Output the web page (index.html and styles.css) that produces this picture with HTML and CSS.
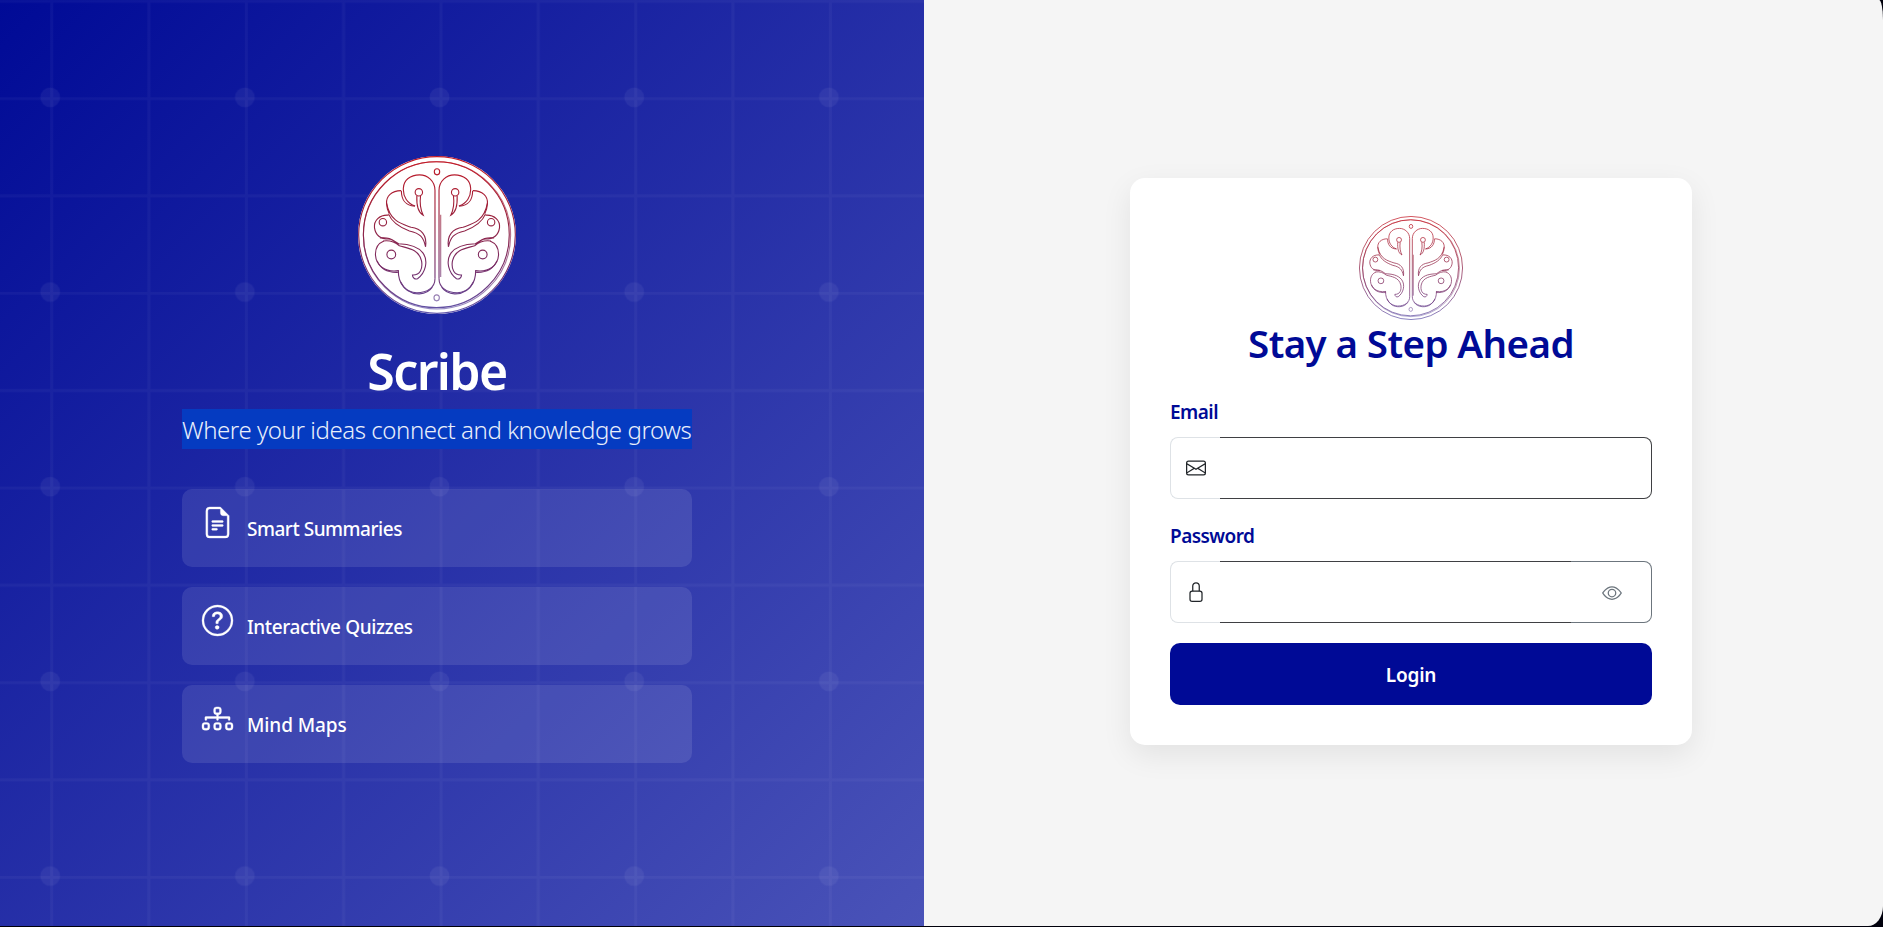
FILE: index.html
```html
<!DOCTYPE html>
<html lang="en">
<head>
<meta charset="utf-8">
<title>Scribe</title>
<link rel="stylesheet" href="styles.css">
</head>
<body>
<svg class="defs" width="0" height="0" aria-hidden="true">
  <defs>
    <linearGradient id="ink" gradientUnits="userSpaceOnUse" x1="0" y1="48" x2="0" y2="522">
      <stop offset="0" stop-color="#c41824"/>
      <stop offset=".4" stop-color="#98203c"/>
      <stop offset=".75" stop-color="#73306f"/>
      <stop offset="1" stop-color="#5f58ae"/>
    </linearGradient>
    <g id="lobes">
      <path d="M284 415V152C284 125 262 106 238 106C210 106 191 122 190 145C188 172 203 192 225 199"/>
      <path d="M184 153C184 178 196 198 224 199"/>
      <path d="M183 153C155 153 138 170 140 192C141 207 144 215 148 222"/>
      <circle cx="236" cy="158" r="11"/>
      <path d="M230 169C229 195 231 217 249 226C241 210 238 192 241 169"/>
      <path d="M140 190C150 245 185 252 213 262C243 266 261 285 256 320C250 292 240 280 208 273C178 262 156 248 146 223"/>
      <path d="M146 226C118 224 102 243 104 263C107 285 120 298 150 297"/>
      <circle cx="129" cy="247" r="11"/>
      <path d="M120 294C150 290 160 302 176 311C200 312 230 315 248 338C265 362 256 398 232 415C224 418 217 412 217 404C240 405 248 385 244 362C236 326 200 324 178 317C165 306 150 300 130 303"/>
      <path d="M132 303C115 310 106 325 107 345C109 375 135 397 176 391"/>
      <path d="M112 362C122 386 142 398 176 396"/>
      <circle cx="154" cy="343" r="13"/>
      <path d="M175 390C174 432 198 455 230 457C262 457 284 440 284 415"/>
      <path d="M182 425C194 450 212 461 238 460C254 459 268 452 276 440"/>
    </g>
    <g id="emblem" fill="none" stroke="url(#ink)">
      <circle cx="290" cy="285" r="233"/>
      <circle cx="288" cy="284" r="217"/>
      <circle cx="290" cy="286" r="219" opacity=".65"/>
      <use href="#lobes"/>
      <use href="#lobes" transform="matrix(-1 0 0 1 580 0)"/>
      <path d="M301 225V410" opacity=".7"/>
      <ellipse cx="290" cy="97" rx="8" ry="9"/>
      <ellipse cx="289" cy="472" rx="8" ry="9" opacity=".7"/>
    </g>
    <pattern id="grid" x="50.2" y="97.3" width="194.67" height="194.67" patternUnits="userSpaceOnUse">
      <path d="M1.4 0V194.67M98.7 0V194.67M0 1.2H194.67M0 98.5H194.67" stroke="#fff" stroke-opacity=".036" stroke-width="3"/>
    </pattern>
    <pattern id="dots" x="-47.1" y="0" width="194.67" height="194.67" patternUnits="userSpaceOnUse">
      <circle cx="97.3" cy="97.3" r="9.8" fill="#fff" fill-opacity=".055"/>
    </pattern>
  </defs>
</svg>

<div class="app">
  <section class="hero">
    <svg class="hero-grid" width="924" height="926">
      <rect width="924" height="926" fill="url(#grid)"/>
      <rect width="924" height="926" fill="url(#dots)"/>
    </svg>
    <div class="hero-content">
      <svg class="logo" viewBox="55 50 470 470"><circle cx="290" cy="285" r="235" fill="#fff"/><use href="#emblem" stroke-width="3.3"/></svg>
      <h1 class="brand">Scribe</h1>
      <p class="tagline">Where your ideas connect and knowledge grows</p>
      <ul class="features">
        <li class="feature">
          <svg class="feature-icon" viewBox="0 0 16 16"><path d="M5.500 7a.5.5 0 0 0 0 1h5a.5.5 0 0 0 0-1zM5 9.500a.5.5 0 0 1 .5-.5h5a.5.5 0 0 1 0 1h-5a.5.5 0 0 1-.5-.5m0 2a.5.5 0 0 1 .5-.5h2a.5.5 0 0 1 0 1h-2a.5.5 0 0 1-.5-.5"/><path d="M9.500 0H4a2 2 0 0 0-2 2v12a2 2 0 0 0 2 2h8a2 2 0 0 0 2-2V4.500zm0 1v2A1.500 1.500 0 0 0 11 4.500h2V14a1 1 0 0 1-1 1H4a1 1 0 0 1-1-1V2a1 1 0 0 1 1-1z"/></svg>
          <span class="feature-name smart">Smart Summaries</span>
        </li>
        <li class="feature">
          <svg class="feature-icon" viewBox="0 0 16 16"><path d="M8 15A7 7 0 1 1 8 1a7 7 0 0 1 0 14m0 1A8 8 0 1 0 8 0a8 8 0 0 0 0 16"/><path d="M5.255 5.786a.237.237 0 0 0 .241.247h.825c.138 0 .248-.113.266-.25.09-.656.54-1.134 1.342-1.134.686 0 1.314.343 1.314 1.168 0 .635-.374.927-.965 1.371-.673.489-1.206 1.060-1.168 1.987l.003.217a.25.25 0 0 0 .25.246h.811a.25.25 0 0 0 .25-.25v-.105c0-.718.273-.927 1.010-1.486.609-.463 1.244-.977 1.244-2.056 0-1.511-1.276-2.241-2.673-2.241-1.267 0-2.655.59-2.750 2.286m1.557 5.763c0 .533.425.927 1.010.927.609 0 1.028-.394 1.028-.927 0-.552-.42-.94-1.029-.94-.584 0-1.009.388-1.009.94"/></svg>
          <span class="feature-name quiz">Interactive Quizzes</span>
        </li>
        <li class="feature">
          <svg class="feature-icon" viewBox="0 0 16 16"><path fill-rule="evenodd" d="M6 3.500A1.500 1.500 0 0 1 7.500 2h1A1.500 1.500 0 0 1 10 3.500v1A1.500 1.500 0 0 1 8.500 6v1H14a.5.5 0 0 1 .5.5v1a.5.5 0 0 1-1 0V8h-5v.5a.5.5 0 0 1-1 0V8h-5v.5a.5.5 0 0 1-1 0v-1A.5.5 0 0 1 2 7h5.500V6A1.500 1.500 0 0 1 6 4.500zM8.500 5a.5.5 0 0 0 .5-.5v-1a.5.5 0 0 0-.5-.5h-1a.5.5 0 0 0-.5.5v1a.5.5 0 0 0 .5.5zM0 11.500A1.500 1.500 0 0 1 1.500 10h1A1.500 1.500 0 0 1 4 11.500v1A1.500 1.500 0 0 1 2.500 14h-1A1.500 1.500 0 0 1 0 12.500zm1.500-.5a.5.5 0 0 0-.5.5v1a.5.5 0 0 0 .5.5h1a.5.5 0 0 0 .5-.5v-1a.5.5 0 0 0-.5-.5zm4.500.5A1.500 1.500 0 0 1 7.500 10h1a1.500 1.500 0 0 1 1.500 1.500v1A1.500 1.500 0 0 1 8.500 14h-1A1.500 1.500 0 0 1 6 12.500zm1.500-.5a.5.5 0 0 0-.5.5v1a.5.5 0 0 0 .5.5h1a.5.5 0 0 0 .5-.5v-1a.5.5 0 0 0-.5-.5zm4.500.5a1.500 1.500 0 0 1 1.500-1.500h1a1.500 1.500 0 0 1 1.500 1.500v1a1.500 1.500 0 0 1-1.500 1.500h-1a1.500 1.500 0 0 1-1.500-1.500zm1.500-.5a.5.5 0 0 0-.5.5v1a.5.5 0 0 0 .5.5h1a.5.5 0 0 0 .5-.5v-1a.5.5 0 0 0-.5-.5z"/></svg>
          <span class="feature-name maps">Mind Maps</span>
        </li>
      </ul>
    </div>
  </section>

  <main class="auth">
    <form class="card">
      <svg class="logo-small" viewBox="55 50 470 470"><use href="#emblem" stroke-width="3.3"/></svg>
      <h2 class="title">Stay a Step Ahead</h2>
      <label class="label email" for="email">Email</label>
      <div class="field">
        <span class="prefix"><svg class="icon" viewBox="0 0 16 16"><path d="M0 4a2 2 0 0 1 2-2h12a2 2 0 0 1 2 2v8a2 2 0 0 1-2 2H2a2 2 0 0 1-2-2zm2-1a1 1 0 0 0-1 1v.217l7 4.200 7-4.200V4a1 1 0 0 0-1-1zm13 2.383-4.708 2.825L15 11.105zm-.034 6.876-5.640-3.471L8 9.583l-1.326-.795-5.640 3.470A1 1 0 0 0 2 13h12a1 1 0 0 0 .966-.741M1 11.105l4.708-2.897L1 5.383z"/></svg></span>
        <input class="input last" id="email" type="email">
      </div>
      <label class="label password" for="password">Password</label>
      <div class="field">
        <span class="prefix"><svg class="icon lock" viewBox="0 0 16 16"><rect x="3.200" y="7.300" width="9.600" height="8.200" rx="1.700"/><path d="M5.400 7.300V3.200a2.600 2.600 0 0 1 5.200 0V7.300"/></svg></span>
        <input class="input" id="password" type="password">
        <button class="reveal" type="button" aria-label="Show password"><svg class="icon" viewBox="0 0 16 16"><path d="M16 8s-3-5.500-8-5.500S0 8 0 8s3 5.500 8 5.500S16 8 16 8M1.173 8a13 13 0 0 1 1.660-2.043C4.120 4.668 5.880 3.500 8 3.500s3.879 1.168 5.168 2.457A13 13 0 0 1 14.828 8q-.086.13-.195.288c-.335.48-.83 1.120-1.465 1.755C11.879 11.332 10.119 12.500 8 12.500s-3.879-1.168-5.168-2.457A13 13 0 0 1 1.172 8z"/><path d="M8 5.500a2.500 2.500 0 1 0 0 5 2.500 2.500 0 0 0 0-5M4.500 8a3.500 3.500 0 1 1 7 0 3.500 3.500 0 0 1-7 0"/></svg></button>
      </div>
      <button class="login" type="button"><span class="login-text">Login</span></button>
    </form>
  </main>
</div>
</body>
</html>
```
FILE: styles.css
```css
* { box-sizing: border-box; }
html, body { margin: 0; height: 100%; overflow: hidden; background: #00000c; }
body { font-family: "Noto Sans", "Open Sans", sans-serif; }
.defs { display: block; }
.app {
  display: flex;
  height: 926px;
  overflow: hidden;
  background: #f5f5f5;
  border-radius: 0 4px 15px 0 / 0 20px 20px 0;
}
.hero {
  position: relative;
  flex: 0 0 924px;
  display: flex;
  justify-content: center;
  padding-right: 50px;
  background: linear-gradient(135deg, #000a96 0%, #4a53b8 100%);
  color: #fff;
}
.hero-grid { position: absolute; left: 0; top: 0; }
.hero-content {
  position: relative;
  width: 510px;
  padding-top: 156px;
  display: flex;
  flex-direction: column;
  align-items: center;
}
.logo { width: 158px; height: 158px; flex: none; margin-right: 1px; }
.brand {
  margin: 28px 0 0;
  height: 58px;
  line-height: 58px;
  font-size: 50px;
  font-weight: 600;
  letter-spacing: -1.6px;
  white-space: nowrap;
}
.tagline {
  margin: 9px 0 0;
  width: 510px;
  height: 40px;
  line-height: 42px;
  background: #053bc1;
  color: #e9effb;
  font-size: 24px;
  font-weight: 300;
  letter-spacing: -.43px;
  white-space: nowrap;
}
.features {
  list-style: none;
  margin: 40px 0 0;
  padding: 0;
  width: 100%;
  display: flex;
  flex-direction: column;
  gap: 20px;
}
.feature {
  height: 78px;
  padding: 18px 20px 0;
  display: flex;
  align-items: flex-start;
  gap: 14px;
  border-radius: 10px;
  background: rgba(255, 255, 255, .1);
}
.feature-icon { width: 31px; height: 31px; fill: #fff; stroke: #fff; stroke-width: .18; flex: none; overflow: visible; }
.feature-name {
  margin-top: 7px;
  line-height: 30px;
  font-size: 19px;
  font-weight: 500;
  letter-spacing: -.4px;
  white-space: nowrap;
}
.smart { letter-spacing: -.48px; }
.maps { letter-spacing: -.1px; }
.auth { flex: 1; display: flex; justify-content: center; padding: 178px 0 0 15px; }
.card {
  width: 562px;
  height: 567px;
  padding: 38px 40px 0;
  display: flex;
  flex-direction: column;
  border-radius: 15px;
  background: #fff;
  box-shadow: 0 10px 30px rgba(0, 0, 0, .08);
}
.logo-small { width: 104px; height: 104px; margin-right: 1px; align-self: center; flex: none; }
.title {
  margin: -1px 0 0;
  height: 48px;
  line-height: 48px;
  text-align: center;
  color: #000a96;
  font-size: 38.5px;
  font-weight: 600;
  letter-spacing: -.6px;
  white-space: nowrap;
}
.label {
  height: 30px;
  line-height: 30px;
  color: #000a96;
  font-size: 19px;
  font-weight: 600;
  letter-spacing: -.55px;
}
.email { margin: 30px 0 10px; align-self: flex-start; }
.password { margin: 22px 0 10px; align-self: flex-start; }
.field { display: flex; height: 62px; flex: none; }
.prefix {
  width: 50px;
  display: flex;
  align-items: center;
  padding-left: 15px;
  border: 1px solid #dee2e6;
  border-right: 0;
  border-radius: 8px 0 0 8px;
}
.icon { width: 20px; height: 20px; fill: #212529; }
.lock { fill: none; stroke: #212529; stroke-width: 1; }
.input {
  flex: 1;
  min-width: 0;
  padding: 0 15px;
  border: 1px solid #3f4043;
  border-width: 1px 0;
  background: #fff;
  outline: 0;
}
.last { border-right-width: 1px; border-radius: 0 8px 8px 0; }
.reveal {
  width: 81px;
  padding: 1px 0 0 1px;
  display: flex;
  align-items: center;
  justify-content: center;
  border: 1px solid #6c757d;
  border-left: 0;
  border-radius: 0 8px 8px 0;
  background: #fff;
}
.reveal .icon { fill: #6c757d; }
.login {
  margin-top: 20px;
  height: 62px;
  padding: 2px 0 0;
  border: 0;
  border-radius: 10px;
  background: #000a96;
  color: #fff;
  font: 600 19px "Noto Sans", sans-serif;
  letter-spacing: -.2px;
}
```
